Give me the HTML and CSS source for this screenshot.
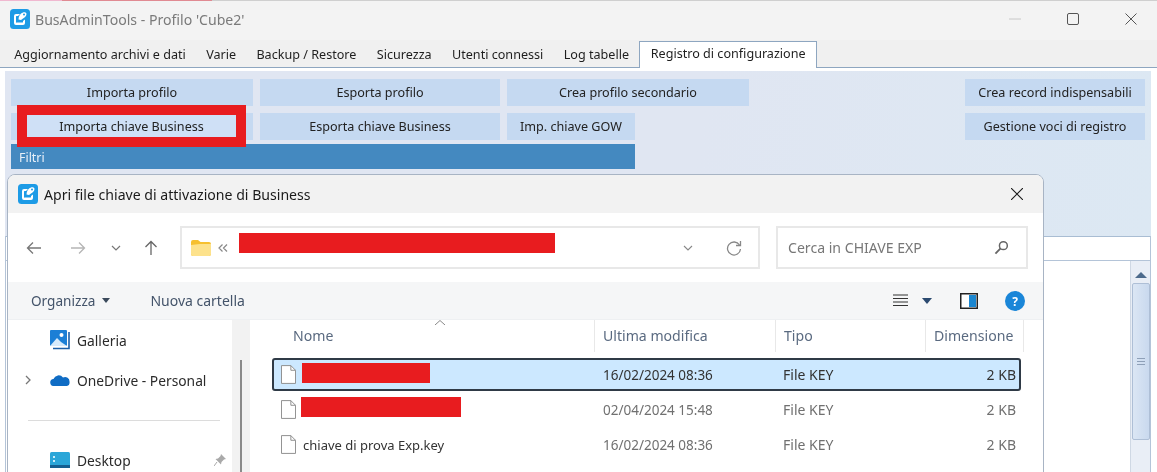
FILE: index.html
```html
<!DOCTYPE html>
<html lang="it">
<head>
<meta charset="utf-8">
<title>BusAdminTools</title>
<link rel="stylesheet" href="styles.css">
</head>
<body>
<div class="desktop">
  <div class="topstrip"><span class="strip-a"></span><span class="strip-b"></span></div>
  <header class="titlebar">
    <svg class="appicon" viewBox="0 0 20 20"><rect width="20" height="20" rx="3.5" fill="#1d9be6"/><path d="M10 5H6Q4 5 4 7v7q0 2 2 2h7q2 0 2-2v-3.500l-2 1.500v1q0 .500-.5.500H6.500Q6 14 6 13.500V7.500Q6 7 6.500 7H8Z" fill="#fff"/><path d="M8.500 10.500c0-3 1.500-6 4.500-7 1.500-.5 3.500 0 3.500 1.500 0 2-2 3.500-3.500 4.500l-2 1.500Z" fill="#fff"/><circle cx="14" cy="5.500" r="1" fill="#1d9be6"/></svg>
    <span class="apptitle">BusAdminTools - Profilo 'Cube2'</span>
    <div class="winctrls">
      <svg class="ctl" viewBox="0 0 12 12"><path d="M0 6h12" stroke="#c8c8c8"/></svg>
      <svg class="ctl" viewBox="0 0 12 12"><rect x=".5" y=".5" width="11" height="11" rx="1.500" fill="none" stroke="#555"/></svg>
      <svg class="ctl" viewBox="0 0 12 12"><path d="M.5.500l11 11M11.500.500l-11 11" stroke="#555" fill="none"/></svg>
    </div>
  </header>
  <nav class="tabs">
    <span class="tab">Aggiornamento archivi e dati</span>
    <span class="tab">Varie</span>
    <span class="tab">Backup / Restore</span>
    <span class="tab">Sicurezza</span>
    <span class="tab">Utenti connessi</span>
    <span class="tab">Log tabelle</span>
    <span class="tab tab-active">Registro di configurazione</span>
  </nav>
  <main class="panel">
    <div class="btnarea">
      <div class="btngrid">
        <button class="btn">Importa profilo</button>
        <button class="btn">Esporta profilo</button>
        <button class="btn">Crea profilo secondario</button>
        <button class="btn">Importa chiave Business</button>
        <button class="btn">Esporta chiave Business</button>
        <button class="btn btn-short">Imp. chiave GOW</button>
      </div>
      <div class="btncol">
        <button class="btn">Crea record indispensabili</button>
        <button class="btn">Gestione voci di registro</button>
      </div>
    </div>
    <div class="filters">Filtri</div>
  </main>
  <section class="gridarea">
    <div class="gridinput"></div>
    <div class="gridbody">
      <div class="vscroll">
        <svg class="vs-arrow" viewBox="0 0 12 6"><path d="M0 6L6 0l6 6Z" fill="#4d6b8c"/></svg>
        <div class="vs-thumb"><span class="grip"></span></div>
      </div>
    </div>
  </section>

  <div class="mark mark-button"><span>Importa chiave Business</span></div>

  <section class="dialog">
    <header class="dlg-title">
      <svg class="appicon" viewBox="0 0 20 20"><rect width="20" height="20" rx="3.5" fill="#1d9be6"/><path d="M10 5H6Q4 5 4 7v7q0 2 2 2h7q2 0 2-2v-3.500l-2 1.500v1q0 .500-.5.500H6.500Q6 14 6 13.500V7.500Q6 7 6.500 7H8Z" fill="#fff"/><path d="M8.500 10.500c0-3 1.500-6 4.500-7 1.500-.5 3.500 0 3.500 1.500 0 2-2 3.500-3.500 4.500l-2 1.500Z" fill="#fff"/><circle cx="14" cy="5.500" r="1" fill="#1d9be6"/></svg>
      <span class="dlg-name">Apri file chiave di attivazione di Business</span>
      <svg class="dlg-close" viewBox="0 0 12 12"><path d="M0 0l12 12M12 0L0 12" stroke="#1a1a1a" stroke-width="1.100" fill="none"/></svg>
    </header>
    <div class="addr">
      <div class="navbtns">
        <svg class="nav" viewBox="0 0 16 14"><path d="M15 7H1.500M7 1.500L1.500 7 7 12.500" fill="none" stroke="#777" stroke-width="1.300"/></svg>
        <svg class="nav" viewBox="0 0 16 14"><path d="M1 7h13.500M9 1.500L14.500 7 9 12.500" fill="none" stroke="#b5b5b5" stroke-width="1.300"/></svg>
        <svg class="nav nav-small" viewBox="0 0 10 6"><path d="M1 1l4 4 4-4" fill="none" stroke="#777" stroke-width="1.200"/></svg>
        <svg class="nav nav-up" viewBox="0 0 14 16"><path d="M7 15V1.500M1.500 7L7 1.500 12.500 7" fill="none" stroke="#666" stroke-width="1.300"/></svg>
      </div>
      <div class="pathbox">
        <svg class="folder" viewBox="0 0 20 16"><path d="M0 2Q0 0 2 0h5l2.500 2H18q2 0 2 2v10q0 2-2 2H2q-2 0-2-2Z" fill="#f6c030"/><path d="M0 5l9-1h11v10q0 2-2 2H2q-2 0-2-2Z" fill="#fde28c"/></svg>
        <svg class="crumb" viewBox="0 0 10 8"><path d="M4.500.500L1 4l3.500 3.500M9 .500L5.500 4 9 7.500" fill="none" stroke="#888" stroke-width="1.200"/></svg>
        <span class="pathfill"></span>
        <svg class="chev" viewBox="0 0 10 6"><path d="M1 1l4 4 4-4" fill="none" stroke="#888" stroke-width="1.100"/></svg>
        <svg class="refresh" viewBox="0 0 16 16"><path d="M13.500 5A6.500 6.500 0 1 0 14.500 9" fill="none" stroke="#888" stroke-width="1.300"/><path d="M14.500 1v4.500H10" fill="none" stroke="#888" stroke-width="1.300"/></svg>
      </div>
      <div class="searchbox">
        <span class="searchtext">Cerca in CHIAVE EXP</span>
        <svg class="lens" viewBox="0 0 16 16"><circle cx="10" cy="6" r="4.200" fill="none" stroke="#666" stroke-width="1.600"/><path d="M7 9l-5.500 5.500" stroke="#666" stroke-width="2"/></svg>
      </div>
    </div>
    <div class="toolbar">
      <span class="tool">Organizza<svg class="caret" viewBox="0 0 8 5"><path d="M0 0h8L4 5Z" fill="#3b4a5c"/></svg></span>
      <span class="tool tool-new">Nuova cartella</span>
      <div class="toolright">
        <svg class="viewicon" viewBox="0 0 15 13"><path d="M0 1h15M0 4.500h15M0 8h15M0 11.500h15" stroke="#333" stroke-width="1.200"/></svg>
        <svg class="caret caret-view" viewBox="0 0 10 6"><path d="M0 0h10L5 6Z" fill="#2b4a70"/></svg>
        <svg class="preview" viewBox="0 0 18 16"><rect x=".75" y=".75" width="16.500" height="14.500" fill="#fff" stroke="#222" stroke-width="1.500"/><rect x="9" y="2" width="7" height="12" fill="#1a86d0"/></svg>
        <svg class="help" viewBox="0 0 20 20"><circle cx="10" cy="10" r="10" fill="#1a86d8"/><text x="10" y="14.500" text-anchor="middle" class="helpmark">?</text></svg>
      </div>
    </div>
    <div class="browser">
      <aside class="sidebar">
        <div class="side-item side-gal">
          <svg class="sideicon" viewBox="0 0 20 20"><rect x="0" y="0" width="17" height="16" rx="1" fill="#1b7fd6"/><path d="M0 16l7-8 4 4 6 4Z" fill="#d6eafb"/><circle cx="11.500" cy="5" r="2" fill="#fff"/><path d="M19 2v16.500H3" fill="none" stroke="#1b5fa8" stroke-width="1.600"/></svg>
          <span>Galleria</span>
        </div>
        <div class="side-item side-one">
          <svg class="expander" viewBox="0 0 6 10"><path d="M1 1l4 4-4 4" fill="none" stroke="#777" stroke-width="1.300"/></svg>
          <svg class="sideicon" viewBox="0 0 20 12"><path d="M4 12a3.500 3.500 0 0 1-.5-7A5.500 5.500 0 0 1 13 3.500 4.500 4.500 0 0 1 19.500 8 3.500 3.500 0 0 1 17 12Z" fill="#0f6cc4"/></svg>
          <span>OneDrive - Personal</span>
        </div>
        <div class="side-sep"></div>
        <div class="side-item side-desk">
          <svg class="sideicon" viewBox="0 0 20 16"><rect width="20" height="16" rx="1.500" fill="#2ba6d8"/><path d="M3 4h2v2H3ZM3 8h2v2H3Z" fill="#cdeefa"/><rect y="13" width="20" height="3" fill="#155f90"/></svg>
          <span>Desktop</span>
          <svg class="pin" viewBox="0 0 12 12"><path d="M7 0l5 5-2 .5-2.500 2.500-.5 2.500L1.500 5 4 4.500 6.500 2Z" fill="#a9a9a9"/><path d="M3 8l-3 4" stroke="#a9a9a9"/></svg>
        </div>
      </aside>
      <div class="sidescroll"><span class="sidethumb"></span></div>
      <div class="files">
        <div class="sortcaret"><svg viewBox="0 0 10 5"><path d="M0 5l5-4.500L10 5" fill="none" stroke="#888"/></svg></div>
        <div class="fhead">
          <span class="col-name">Nome</span>
          <span class="col-date">Ultima modifica</span>
          <span class="col-type">Tipo</span>
          <span class="col-size">Dimensione</span>
        </div>
        <div class="frow frow-sel">
          <span class="col-name"><svg class="fileicon" viewBox="0 0 16 20"><path d="M.5.500h10l5 5v14H.5Z" fill="#fff" stroke="#8a8a8a"/><path d="M10.500.500v5h5" fill="none" stroke="#8a8a8a"/></svg><span class="redact redact-a"></span></span>
          <span class="col-date">16/02/2024 08:36</span>
          <span class="col-type">File KEY</span>
          <span class="col-size">2 KB</span>
        </div>
        <div class="frow">
          <span class="col-name"><svg class="fileicon" viewBox="0 0 16 20"><path d="M.5.500h10l5 5v14H.5Z" fill="#fff" stroke="#8a8a8a"/><path d="M10.500.500v5h5" fill="none" stroke="#8a8a8a"/></svg><span class="redact redact-b"></span></span>
          <span class="col-date">02/04/2024 15:48</span>
          <span class="col-type">File KEY</span>
          <span class="col-size">2 KB</span>
        </div>
        <div class="frow">
          <span class="col-name"><svg class="fileicon" viewBox="0 0 16 20"><path d="M.5.500h10l5 5v14H.5Z" fill="#fff" stroke="#8a8a8a"/><path d="M10.500.500v5h5" fill="none" stroke="#8a8a8a"/></svg><span class="fname">chiave di prova Exp.key</span></span>
          <span class="col-date">16/02/2024 08:36</span>
          <span class="col-type">File KEY</span>
          <span class="col-size">2 KB</span>
        </div>
      </div>
    </div>
  </section>
</div>
</body>
</html>
```
FILE: styles.css
```css
* { box-sizing: border-box; }
html, body { margin: 0; padding: 0; }
body {
  width: 1157px;
  height: 472px;
  overflow: hidden;
  background: #fff;
  font-family: "Noto Sans", "Open Sans", sans-serif;
  font-size: 12.6px;
  color: #222;
}
.desktop {
  position: relative;
  width: 1157px;
  height: 472px;
  overflow: hidden;
  display: flex;
  flex-direction: column;
  background: #fff;
  filter: blur(0.35px);
}
.topstrip { display: flex; height: 1px; background: #cfcfcf; flex: none; }
.strip-a { width: 62px; background: #f0b8d0; }
.strip-b { width: 150px; background: #e08a92; }

.titlebar {
  height: 39px;
  flex: none;
  display: flex;
  align-items: center;
  padding: 0 0 3px 10px;
  background: #f3f3f3;
}
.appicon { width: 20px; height: 20px; flex: none; }
.apptitle { margin-left: 5px; font-size: 14.1px; color: #7a7a7a; }
.winctrls { margin-left: auto; display: flex; align-items: center; gap: 46px; padding-right: 20px; }
.ctl { width: 12px; height: 12px; }

.tabs {
  height: 28px;
  flex: none;
  display: flex;
  align-items: flex-end;
  padding-left: 4px;
  background: #f0f0f0;
  border-bottom: 1px solid #8ea6c0;
}
.tab {
  height: 26px;
  padding: 5px 10.2px 0;
  font-size: 12.6px;
  line-height: 17px;
  color: #1e1e1e;
  white-space: nowrap;
}
.tab-active {
  height: 27px;
  margin-bottom: -1px;
  background: #fff;
  border: 1px solid #8ea6c0;
  border-bottom: 0;
  padding: 3px 10.5px 0;
}

.panel {
  flex: none;
  height: 168px;
  margin: 3px 6px 0 5px;
  padding: 8px 6px 0;
  background: linear-gradient(100deg, #e0e6f2 0%, #e0e6f2 60%, #dce8f3 100%);
}
.btnarea { display: flex; justify-content: space-between; }
.btngrid {
  display: grid;
  grid-template-columns: 242px 240px 242px;
  grid-auto-rows: 27px;
  column-gap: 7px;
  row-gap: 7px;
}
.btncol { display: grid; grid-template-columns: 180px; grid-auto-rows: 27px; row-gap: 7px; }
.btn {
  border: 0;
  margin: 0;
  padding: 0;
  background: #c5d9f1;
  font: inherit;
  font-size: 12.6px;
  color: #222;
  white-space: nowrap;
}
.btn-short { width: 128px; }
.filters {
  width: 624px;
  height: 25px;
  margin-top: 4px;
  padding: 5px 8px 0;
  background: #4489c0;
  color: #e8f0f8;
  font-size: 12.4px;
}

.gridarea { flex: 1; margin: -3px 6px 0 5px; display: flex; flex-direction: column; border-left: 1px solid #b4c4d8; border-right: 1px solid #b4c4d8; }
.gridinput { height: 25px; flex: none; background: #fff; border-top: 1px solid #a9bdd3; border-bottom: 1px solid #b4c4d8; }
.gridbody { flex: 1; display: flex; justify-content: flex-end; background: #fff; }
.vscroll { width: 20px; background: #e9eef6; display: flex; flex-direction: column; align-items: center; border-left: 1px solid #cfd8e4; }
.vs-arrow { width: 12px; height: 6px; margin-top: 11px; }
.vs-thumb {
  width: 18px; height: 157px; margin-top: 5px;
  background: linear-gradient(90deg, #dbe6f4, #c9d9ee);
  border: 1px solid #aebfd6;
  border-radius: 2px;
  display: flex; align-items: center; justify-content: center;
}
.grip { width: 8px; height: 7px; border-top: 1px solid #8ea0b8; border-bottom: 1px solid #8ea0b8; background: linear-gradient(#8ea0b8,#8ea0b8) center/100% 1px no-repeat; }

.mark {
  position: absolute;
  left: 17px; top: 105px;
  width: 229px; height: 42px;
  border: 10px solid #e81c1f;
  background: #cfe0f6;
  display: flex; align-items: center; justify-content: center;
  font-size: 12.6px;
}

.dialog {
  position: absolute;
  left: 7px; top: 174px;
  width: 1037px; height: 320px;
  background: #fff;
  border: 1px solid #a8b4c4;
  border-radius: 8px 8px 0 0;
  display: flex; flex-direction: column;
  overflow: hidden;
}
.dlg-title {
  height: 38px; flex: none;
  display: flex; align-items: center;
  padding: 0 20px 0 10px;
  background: #f2f2f2;
}
.dlg-name { margin-left: 6px; font-size: 14.1px; color: #1a1a1a; }
.dlg-close { margin-left: auto; width: 12px; height: 12px; }

.addr {
  height: 69px; flex: none;
  display: flex; align-items: center;
  padding: 0 15px 0 18px;
  background: #fff;
}
.navbtns { width: 154px; flex: none; display: flex; align-items: center; }
.nav { width: 16px; height: 14px; margin-right: 28px; }
.nav-small { width: 10px; height: 6px; margin-right: 25px; margin-left: -3px; }
.nav-up { width: 14px; height: 16px; margin-right: 0; margin-left: -2px; }
.pathbox, .searchbox {
  height: 43px;
  border: 2px solid #e8e8e8;
  display: flex; align-items: center;
  flex: none;
}
.pathbox { width: 580px; padding: 0 16px 0 9px; }
.folder { width: 20px; height: 16px; flex: none; }
.crumb { width: 10px; height: 8px; margin-left: 7px; flex: none; }
.pathfill {
  width: 316px; height: 20px; margin-left: 11px; margin-top: -10px;
  background: #e81c1f; flex: none;
}
.chev { width: 10px; height: 6px; margin-left: auto; margin-right: 33px; }
.refresh { width: 16px; height: 16px; }
.searchbox { width: 252px; margin-left: 16px; padding: 0 17px 0 10px; justify-content: space-between; }
.searchtext { color: #777; font-size: 14.1px; }
.lens { width: 15px; height: 15px; }

.toolbar {
  height: 38px; flex: none;
  display: flex; align-items: center;
  padding: 0 18px 0 23px;
  background: #f5f6f7;
  color: #44546a;
  border-bottom: 1px solid #eef0f2;
}
.tool { display: flex; align-items: center; font-size: 13.6px; }
.caret { width: 8px; height: 5px; margin-left: 7px; }
.tool-new { margin-left: 40px; font-size: 14px; }
.toolright { margin-left: auto; display: flex; align-items: center; }
.viewicon { width: 15px; height: 13px; }
.caret-view { width: 10px; height: 6px; margin-left: 14px; }
.preview { width: 18px; height: 16px; margin-left: 28px; }
.help { width: 20px; height: 20px; margin-left: 27px; }
.helpmark { font-family: "Noto Sans", sans-serif; font-size: 12px; font-weight: 700; fill: #fff; }

.browser { flex: 1; display: flex; min-height: 0; }
.sidebar { width: 224px; flex: none; display: flex; flex-direction: column; background: #fff; padding-top: 9px; }
.side-item { display: flex; align-items: center; height: 22px; font-size: 13.8px; color: #2b2b2b; padding-left: 42px; position: relative; }
.sideicon { width: 20px; height: 20px; flex: none; margin-right: 7px; }
.side-one { margin-top: 18px; padding-left: 17px; }
.expander { width: 6px; height: 10px; margin-right: 19px; }
.side-one .sideicon { height: 12px; }
.side-sep { height: 1px; margin: 29px 12px 0 20px; background: #dcdcdc; flex: none; }
.side-desk { margin-top: 28px; }
.side-desk .sideicon { height: 16px; }
.pin { width: 12px; height: 12px; margin-left: auto; margin-right: 6px; }
.sidescroll { width: 18px; flex: none; background: #f2f2f2; display: flex; justify-content: center; padding-top: 40px; }
.sidethumb { width: 2px; height: 120px; background: #8a8a8a; }

.files { flex: 1; position: relative; min-width: 0; }
.sortcaret { position: absolute; left: 185px; top: 0; }
.sortcaret svg { display: block; width: 10px; height: 5px; }
.fhead {
  display: grid;
  grid-template-columns: 344px 181px 150px 99px;
  height: 32px;
  align-items: stretch;
  color: #5a6a80;
  font-size: 14.1px;
}
.fhead span { padding: 6px 0 0 43px; }
.fhead .col-date, .fhead .col-type, .fhead .col-size { padding-left: 8px; border-left: 1px solid #e8e8e8; }
.fhead .col-size { border-right: 1px solid #e8e8e8; }
.frow {
  display: grid;
  grid-template-columns: 322px 180px 150px 95px;
  width: 747px;
  height: 31px;
  margin: 4px 0 4px 23px;
  align-items: center;
  font-size: 13.5px;
  color: #707070;
}
.fhead + .frow { margin-top: 7px; }
.frow-sel { background: #cce8ff; outline: 2px solid #2f3a46; outline-offset: -1px; border-radius: 2px; color: #333; }
.frow .col-name { display: flex; align-items: center; padding-left: 8px; }
.frow .col-date { padding-left: 8px; }
.frow .col-type { padding-left: 8px; font-size: 14px; }
.frow .col-size { text-align: right; padding-right: 4px; font-size: 14px; }
.fileicon { width: 15px; height: 19px; flex: none; }
.fname { margin-left: 7px; color: #333; font-size: 13px; white-space: nowrap; }
.redact { margin-left: 6px; background: #e81c1f; flex: none; }
.redact-a { width: 128px; height: 20px; margin-top: -3px; }
.redact-b { width: 160px; height: 20px; margin-left: 5px; margin-top: -6px; }
```
